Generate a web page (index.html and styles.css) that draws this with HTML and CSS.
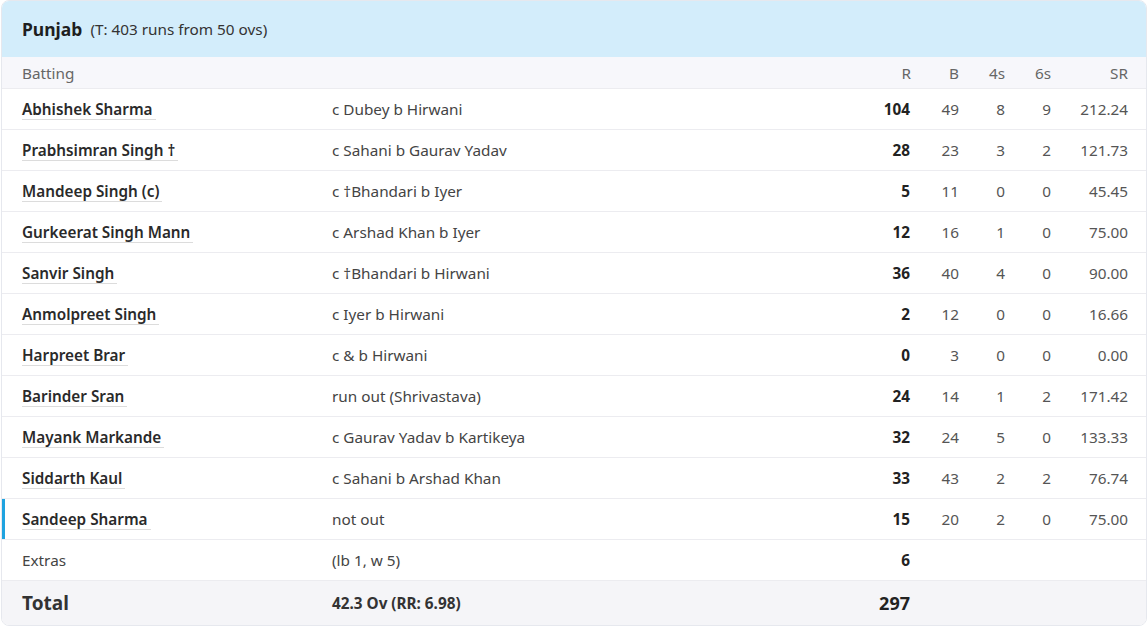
FILE: index.html
```html
<!DOCTYPE html>
<html>
<head>
    <title>Punjab Scorecard</title>
    <link rel="stylesheet" href="styles.css">
</head>
<body>

<div class="card">
    <div class="card-head">
        <span class="team">Punjab</span>
        <span class="target">(T: 403 runs from 50 ovs)</span>
    </div>

    <table class="score">
        <colgroup>
            <col class="c-name">
            <col class="c-how">
            <col class="c-r">
            <col class="c-b">
            <col class="c-4">
            <col class="c-6">
            <col class="c-sr">
        </colgroup>
        <thead>
            <tr>
                <th class="name">Batting</th>
                <th class="how"></th>
                <th class="num">R</th>
                <th class="num">B</th>
                <th class="num">4s</th>
                <th class="num">6s</th>
                <th class="num sr">SR</th>
            </tr>
        </thead>
        <tbody>
            <tr>
                <td class="name"><a href="#">Abhishek Sharma</a></td>
                <td class="how">c Dubey b Hirwani</td>
                <td class="num runs">104</td><td class="num">49</td><td class="num">8</td><td class="num">9</td><td class="num sr">212.24</td>
            </tr>
            <tr>
                <td class="name"><a href="#">Prabhsimran Singh &dagger;</a></td>
                <td class="how">c Sahani b Gaurav Yadav</td>
                <td class="num runs">28</td><td class="num">23</td><td class="num">3</td><td class="num">2</td><td class="num sr">121.73</td>
            </tr>
            <tr>
                <td class="name"><a href="#">Mandeep Singh (c)</a></td>
                <td class="how">c &dagger;Bhandari b Iyer</td>
                <td class="num runs">5</td><td class="num">11</td><td class="num">0</td><td class="num">0</td><td class="num sr">45.45</td>
            </tr>
            <tr>
                <td class="name"><a href="#">Gurkeerat Singh Mann</a></td>
                <td class="how">c Arshad Khan b Iyer</td>
                <td class="num runs">12</td><td class="num">16</td><td class="num">1</td><td class="num">0</td><td class="num sr">75.00</td>
            </tr>
            <tr>
                <td class="name"><a href="#">Sanvir Singh</a></td>
                <td class="how">c &dagger;Bhandari b Hirwani</td>
                <td class="num runs">36</td><td class="num">40</td><td class="num">4</td><td class="num">0</td><td class="num sr">90.00</td>
            </tr>
            <tr>
                <td class="name"><a href="#">Anmolpreet Singh</a></td>
                <td class="how">c Iyer b Hirwani</td>
                <td class="num runs">2</td><td class="num">12</td><td class="num">0</td><td class="num">0</td><td class="num sr">16.66</td>
            </tr>
            <tr>
                <td class="name"><a href="#">Harpreet Brar</a></td>
                <td class="how">c &amp; b Hirwani</td>
                <td class="num runs">0</td><td class="num">3</td><td class="num">0</td><td class="num">0</td><td class="num sr">0.00</td>
            </tr>
            <tr>
                <td class="name"><a href="#">Barinder Sran</a></td>
                <td class="how">run out (Shrivastava)</td>
                <td class="num runs">24</td><td class="num">14</td><td class="num">1</td><td class="num">2</td><td class="num sr">171.42</td>
            </tr>
            <tr>
                <td class="name"><a href="#">Mayank Markande</a></td>
                <td class="how">c Gaurav Yadav b Kartikeya</td>
                <td class="num runs">32</td><td class="num">24</td><td class="num">5</td><td class="num">0</td><td class="num sr">133.33</td>
            </tr>
            <tr>
                <td class="name"><a href="#">Siddarth Kaul</a></td>
                <td class="how">c Sahani b Arshad Khan</td>
                <td class="num runs">33</td><td class="num">43</td><td class="num">2</td><td class="num">2</td><td class="num sr">76.74</td>
            </tr>
            <tr class="batting-now">
                <td class="name"><a href="#">Sandeep Sharma</a></td>
                <td class="how">not out</td>
                <td class="num runs">15</td><td class="num">20</td><td class="num">2</td><td class="num">0</td><td class="num sr">75.00</td>
            </tr>
            <tr class="extras">
                <td class="name">Extras</td>
                <td class="how">(lb 1, w 5)</td>
                <td class="num runs">6</td><td></td><td></td><td></td><td></td>
            </tr>
            <tr class="total">
                <td class="name">Total</td>
                <td class="how">42.3 Ov (RR: 6.98)</td>
                <td class="num runs">297</td><td></td><td></td><td></td><td></td>
            </tr>
        </tbody>
    </table>
</div>

</body>
</html>
```

FILE: styles.css
```css
body {
    margin: 0;
    background-color: #fff;
    font-family: "Noto Sans", "Open Sans", sans-serif;
    color: #333;
}

.card {
    margin: 0 1px 0 1px;
    border: 1px solid #e6e8ee;
    border-radius: 8px;
    overflow: hidden;
    background-color: #fff;
}

.card-head {
    background-color: #d3edfb;
    height: 56px;
    padding: 0 20px;
    display: flex;
    align-items: center;
    gap: 8px;
}

.team {
    font-size: 17.5px;
    font-weight: 700;
    color: #1f1f1f;
}

.target {
    font-size: 15.3px;
    color: #333;
}

.score {
    width: 100%;
    border-collapse: collapse;
    table-layout: fixed;
    font-size: 15.3px;
}

.c-name { width: 310px; }
.c-r { width: 70px; }
.c-b { width: 48px; }
.c-4 { width: 46px; }
.c-6 { width: 46px; }
.c-sr { width: 95px; }

.score th,
.score td {
    padding: 0;
    white-space: nowrap;
}

.score th {
    background-color: #f7f7fb;
    height: 31px;
    font-weight: 400;
    color: #666;
    text-align: left;
}

.score td {
    height: 40px;
    border-top: 1px solid #ececf0;
    color: #444;
}

.score .name {
    padding-left: 20px;
}

.score .how {
    padding-left: 20px;
}

.score .num {
    text-align: right;
}

.score .runs {
    padding-right: 1px;
}

.score .sr {
    padding-right: 18px;
}

.score td.num {
    color: #555;
}

.score td.runs {
    color: #222;
    font-weight: 700;
}

.name a {
    color: #2a2a2a;
    font-weight: 600;
    text-decoration: none;
    padding-right: 3px;
    border-bottom: 1px solid #dcdcdc;
}

.batting-now td:first-child {
    box-shadow: inset 3px 0 0 #1fa3e0;
}

.extras td.name {
    color: #444;
}

.total td {
    background-color: #f5f5f8;
    height: 44px;
}

.total td.name {
    font-size: 19px;
    font-weight: 700;
    color: #333;
}

.total td.how {
    font-weight: 700;
    color: #333;
}

.total td.runs {
    font-size: 18px;
}
```
